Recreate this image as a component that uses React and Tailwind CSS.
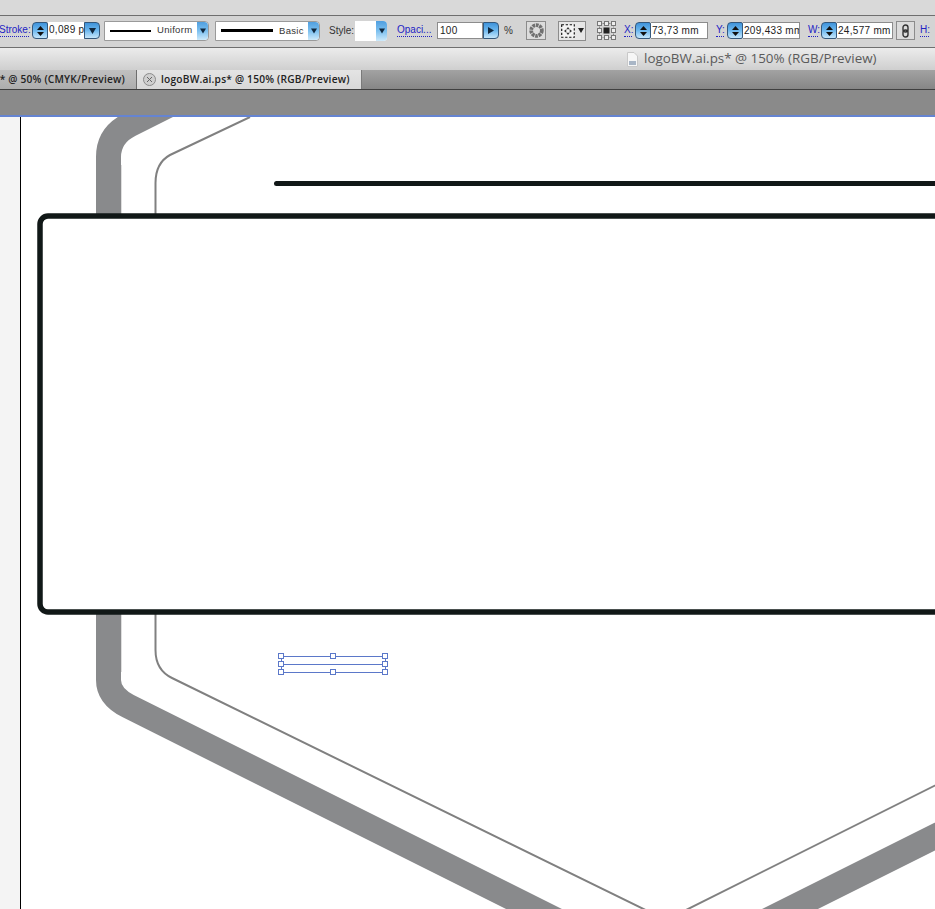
const blueBtn = "bg-gradient-to-b from-[#3f93da] via-[#6db8ee] to-[#c4e6fb] border border-[#34587c]";

function Spinner({ className }) {
  return (
    <div className={`w-4 h-[17px] rounded-l-[4px] rounded-r-[2px] flex flex-col items-center justify-center gap-[2px] ${blueBtn} ${className || ""}`}>
      <svg width="7" height="4" viewBox="0 0 7 4"><path d="M3.5 0L7 4H0z" fill="#111" /></svg>
      <svg width="7" height="4" viewBox="0 0 7 4"><path d="M3.5 4L7 0H0z" fill="#111" /></svg>
    </div>
  );
}

function DownBtn({ className }) {
  return (
    <div className={`h-[17px] flex items-center justify-center rounded-r-[4px] ${blueBtn} ${className || ""}`}>
      <svg width="7" height="6" viewBox="0 0 7 6"><path d="M0 0H7L3.5 6z" fill="#10283f" /></svg>
    </div>
  );
}

function Combo({ left, width, stroke, label, labelClass, line }) {
  return (
    <div className={`h-5 flex bg-white border border-[#9a9a9a] rounded-r-[4px] ${left} ${width}`}>
      <div className="flex-1 flex items-center pl-[5px]">
        <div className={`bg-black ${stroke} ${line}`} />
        <span className={`text-[9.5px] text-[#333] ${labelClass}`}>{label}</span>
      </div>
      <div className="w-[11px] flex items-center justify-center rounded-r-[4px] bg-gradient-to-b from-[#4f9fe0] via-[#7cc0ef] to-[#cdeafb]">
        <svg width="6" height="6" viewBox="0 0 7 6"><path d="M0 0H7L3.5 6z" fill="#10283f" /></svg>
      </div>
    </div>
  );
}

function LinkLabel({ children, className }) {
  return (
    <span className={`text-[10px] leading-[12px] text-[#2323c4] border-b border-dotted border-[#2323c4] whitespace-nowrap ${className || ""}`}>
      {children}
    </span>
  );
}

function Field({ value, width }) {
  return (
    <div className={`h-[17px] bg-white border border-[#8c8c8c] border-l-0 overflow-hidden whitespace-nowrap pl-[1px] text-[10px] leading-[15px] text-[#222] tracking-[0.3px] ${width}`}>
      {value}
    </div>
  );
}

function ControlBar() {
  return (
    <div className="h-[31px] pb-[2px] bg-[#d4d4d4] flex items-center overflow-hidden">
      <LinkLabel className="-ml-px w-[30px] shrink-0">Stroke:</LinkLabel>
      <Spinner className="ml-[3px] shrink-0" />
      <div className="w-9 h-[17px] bg-white overflow-hidden whitespace-nowrap pl-[1px] text-[10px] leading-[15px] text-[#222] tracking-[0.3px] shrink-0">0,089 p</div>
      <DownBtn className="w-4 shrink-0" />
      <Combo left="ml-1 shrink-0" width="w-[105px]" stroke="h-[2px]" line="w-[41px] mr-[6px]" label="Uniform" labelClass="tracking-[0.3px]" />
      <Combo left="ml-[6px] shrink-0" width="w-[105px]" stroke="h-[3px]" line="w-[52px] mr-[6px]" label="Basic" labelClass="tracking-[0.3px] mt-[2px]" />
      <span className="ml-[9px] w-[25px] shrink-0 text-[10px] text-[#333]">Style:</span>
      <div className="ml-px shrink-0 w-8 h-5 flex bg-white rounded-r-[4px]">
        <div className="flex-1" />
        <div className="w-[11px] flex items-center justify-center rounded-r-[4px] bg-gradient-to-b from-[#4f9fe0] via-[#7cc0ef] to-[#cdeafb]">
          <svg width="6" height="6" viewBox="0 0 7 6"><path d="M0 0H7L3.5 6z" fill="#10283f" /></svg>
        </div>
      </div>
      <LinkLabel className="ml-[10px] w-[35px] shrink-0">Opaci...</LinkLabel>
      <div className="ml-[5px] shrink-0 w-[46px] h-[17px] bg-white border border-[#8c8c8c] pl-[2px] text-[10px] leading-[15px] text-[#222] tracking-[0.3px]">100</div>
      <div className={`w-4 h-[17px] shrink-0 flex items-center justify-center rounded-r-[4px] ${blueBtn}`}>
        <svg width="6" height="7" viewBox="0 0 6 7"><path d="M0 0L6 3.5L0 7z" fill="#10283f" /></svg>
      </div>
      <span className="ml-[5px] w-[17px] shrink-0 text-[10px] text-[#333]">%</span>
      <div className="ml-[5px] shrink-0 w-5 h-[19px] bg-[#dcdcdc] border border-[#8c8c8c] flex items-center justify-center">
        <svg width="15" height="15" viewBox="0 0 14 14">
          <circle cx="7" cy="7" r="5" fill="none" stroke="#707070" strokeWidth="3.5" strokeDasharray="2.500 0.700" />
        </svg>
      </div>
      <div className="ml-3 shrink-0 w-7 h-5 bg-[#e6e6e6] border border-[#8c8c8c] flex items-center pl-[1px] gap-[2px]">
        <svg width="16" height="16" viewBox="0 0 14 14">
          <rect x="1.500" y="1.500" width="11" height="11" fill="#f4f4f4" stroke="#111" strokeDasharray="2 1.500" />
          <path d="M7 3.500L8.500 5.500H5.500zM7 10.500L8.500 8.500H5.500zM3.500 7L5.500 5.500V8.500zM10.500 7L8.500 5.500V8.500z" fill="#333" />
        </svg>
        <svg width="6" height="5" viewBox="0 0 6 5"><path d="M0 0H6L3 5z" fill="#222" /></svg>
      </div>
      <svg className="ml-[11px] shrink-0" width="19" height="19" viewBox="0 0 19 19">
        <path d="M2.500 2.500H16.500V16.500H2.500z" fill="none" stroke="#888" strokeDasharray="2 1" />
        <g fill="#eee" stroke="#777" strokeWidth="1">
          <rect x="0.500" y="0.500" width="4" height="4" />
          <rect x="7.500" y="0.500" width="4" height="4" />
          <rect x="14.500" y="0.500" width="4" height="4" />
          <rect x="0.500" y="7.500" width="4" height="4" />
          <rect x="14.500" y="7.500" width="4" height="4" />
          <rect x="0.500" y="14.500" width="4" height="4" />
          <rect x="7.500" y="14.500" width="4" height="4" />
          <rect x="14.500" y="14.500" width="4" height="4" />
        </g>
        <rect x="6.500" y="6.500" width="6" height="6" fill="#222" />
      </svg>
      <LinkLabel className="ml-2 w-2 shrink-0">X:</LinkLabel>
      <Spinner className="ml-[3px] shrink-0" />
      <Field value="73,73 mm" width="w-[57px] shrink-0" />
      <LinkLabel className="ml-2 w-2 shrink-0">Y:</LinkLabel>
      <Spinner className="ml-[3px] shrink-0" />
      <Field value="209,433 mm" width="w-[57px] shrink-0" />
      <LinkLabel className="ml-2 w-[10px] shrink-0">W:</LinkLabel>
      <Spinner className="ml-[3px] shrink-0" />
      <Field value="24,577 mm" width="w-[56px] shrink-0" />
      <div className="ml-[3px] shrink-0 w-[19px] h-[19px] bg-[#dcdcdc] border border-[#8c8c8c] flex items-center justify-center">
        <svg width="7" height="14" viewBox="0 0 7 14" fill="none" stroke="#333" strokeWidth="1.400">
          <rect x="1" y="1" width="5" height="7" rx="2.500" />
          <rect x="1" y="6" width="5" height="7" rx="2.500" />
        </svg>
      </div>
      <LinkLabel className="ml-[5px] w-[9px] shrink-0">H:</LinkLabel>
    </div>
  );
}

function TitleBar() {
  return (
    <div className="h-[22px] bg-gradient-to-b from-[#ececec] to-[#cfcfcf] flex items-center pl-[627px]">
      <svg width="11" height="15" viewBox="0 0 11 15">
        <path d="M0.500 0.500H7L10.500 4V14.500H0.500z" fill="#f6f6f6" stroke="#c8c8c8" />
        <rect x="2" y="9" width="7" height="4" fill="#a9b6c6" />
      </svg>
      <span className="ml-[6px] text-[13.400px] leading-none text-[#5a5a5a] whitespace-nowrap font-['Open_Sans',sans-serif]">logoBW.ai.ps* @ 150% (RGB/Preview)</span>
    </div>
  );
}

function TabBar() {
  return (
    <div className="h-5 flex bg-gradient-to-b from-[#a2a2a2] to-[#868686] border-b border-[#3f3f3f]">
      <div className="w-[137px] h-[19px] bg-gradient-to-b from-[#c0c0c0] to-[#adadad] border-r border-[#6e6e6e] flex items-center justify-end pr-[11px] overflow-hidden whitespace-nowrap">
        <span className="text-[10.200px] font-semibold text-[#222] tracking-[0.2px] font-['Open_Sans',sans-serif]">* @ 50% (CMYK/Preview)</span>
      </div>
      <div className="w-[225px] h-[19px] bg-gradient-to-b from-[#e4e4e4] to-[#d8d8d8] flex items-center pl-[6px] border-r border-[#7a7a7a]">
        <svg width="13" height="13" viewBox="0 0 13 13" fill="none">
          <circle cx="6.500" cy="6.500" r="6" fill="#cfcfcf" stroke="#8b8b8b" />
          <path d="M4 4L9 9M9 4L4 9" stroke="#666" />
        </svg>
        <span className="ml-[5px] text-[10.200px] font-semibold text-[#222] tracking-[0.2px] whitespace-nowrap font-['Open_Sans',sans-serif]">logoBW.ai.ps* @ 150% (RGB/Preview)</span>
      </div>
    </div>
  );
}

const handles = [
  [281, 656], [333, 656], [385, 656],
  [281, 664], [385, 664],
  [281, 672], [333, 672], [385, 672],
];

function Artwork() {
  return (
    <svg className="flex-1 h-full block" viewBox="21 117 914 792" width="914" height="792">
      <path
        d="M180 99.500L130 124.500Q108.500 135 108.500 157V680Q108.500 696 128 706L662 973L1000 804"
        fill="none"
        stroke="#898a8c"
        strokeWidth="25"
      />
      <path d="M121.500 165V672" stroke="#dedede" strokeWidth="1" />
      <path
        d="M250 117L170 155Q155.500 163 155.500 183V650Q155.500 670 172 678L666 920L950 778"
        fill="none"
        stroke="#808080"
        strokeWidth="2"
      />
      <path d="M276.500 183.500H960" stroke="#111817" strokeWidth="5" strokeLinecap="round" />
      <rect x="40" y="216" width="1000" height="396" rx="8" fill="#fff" stroke="#111817" strokeWidth="5.500" />
      <g fill="none" stroke="#5b78c9" strokeWidth="1">
        <path d="M281 656.500H385M281 664.500H385M281 672.500H385M281.500 656V672M385.500 656V672" />
        {handles.map(([x, y]) => (
          <rect key={`${x}-${y}`} x={x - 2.500} y={y - 2.500} width="5" height="5" fill="#fff" />
        ))}
      </g>
    </svg>
  );
}

export default function App() {
  return (
    <div className="w-[935px] h-[909px] overflow-hidden flex flex-col bg-white font-['Liberation_Sans',sans-serif]">
      <div className="h-[15px] bg-[#d9d9d9] border-b border-[#6f6f6f] box-content" />
      <ControlBar />
      <div className="h-px bg-[#6f6f6f]" />
      <TitleBar />
      <TabBar />
      <div className="h-[25px] bg-[#8a8a8a]" />
      <div className="h-[2px] bg-[#6584d2]" />
      <div className="flex-1 flex min-h-0">
        <div className="w-[21px] bg-[#f4f4f4] border-r border-black" />
        <Artwork />
      </div>
    </div>
  );
}
